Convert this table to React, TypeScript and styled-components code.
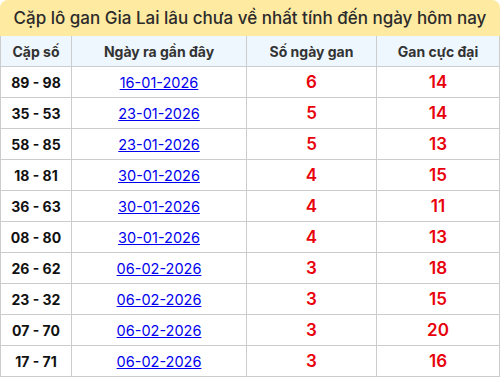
import React from "react";
import styled, { createGlobalStyle } from "styled-components";

const Global = createGlobalStyle`
  html, body { margin: 0; padding: 0; background: #fff; }
  body { font-family: "Inter", "Noto Sans", sans-serif; }
`;

const Wrap = styled.div`
  width: 500px;
`;

const Title = styled.div`
  height: 36px;
  background: #feeaa1;
  border-radius: 8px 8px 0 0;
  display: flex;
  align-items: center;
  justify-content: center;
  font-size: 17px;
  color: #2b2b2b;
  font-weight: 500;
  box-sizing: border-box;
`;

const Table = styled.table`
  width: 500px;
  border-collapse: collapse;
  table-layout: fixed;
`;

const Th = styled.th<{ $w?: number }>`
  width: ${(p) => (p.$w ? `${p.$w}px` : "auto")};
  height: 30px;
  padding: 0;
  background: #eef6fe;
  border: 1px solid #cccccc;
  border-top: none;
  font-size: 14px;
  font-weight: 700;
  color: #333;
  text-align: center;
`;

const Td = styled.td`
  height: 30px;
  padding: 0;
  border: 1px solid #cccccc;
  text-align: center;
`;

const Pair = styled.span`
  font-size: 14px;
  font-weight: 700;
  color: #111;
`;

const DateLink = styled.a`
  font-size: 14.5px;
  color: #0000ee;
  text-decoration: underline;
`;

const Num = styled.span`
  font-size: 17px;
  font-weight: 600;
  color: #e8000b;
`;

const rows = [
  ["89 - 98", "16-01-2026", "6", "14"],
  ["35 - 53", "23-01-2026", "5", "14"],
  ["58 - 85", "23-01-2026", "5", "13"],
  ["18 - 81", "30-01-2026", "4", "15"],
  ["36 - 63", "30-01-2026", "4", "11"],
  ["08 - 80", "30-01-2026", "4", "13"],
  ["26 - 62", "06-02-2026", "3", "18"],
  ["23 - 32", "06-02-2026", "3", "15"],
  ["07 - 70", "06-02-2026", "3", "20"],
  ["17 - 71", "06-02-2026", "3", "16"],
];

export default function App() {
  return (
    <Wrap>
      <Global />
      <Title>Cặp lô gan Gia Lai lâu chưa về nhất tính đến ngày hôm nay</Title>
      <Table>
        <thead>
          <tr>
            <Th $w={70}>Cặp số</Th>
            <Th $w={174}>Ngày ra gần đây</Th>
            <Th $w={129}>Số ngày gan</Th>
            <Th>Gan cực đại</Th>
          </tr>
        </thead>
        <tbody>
          {rows.map((r, i) => (
            <tr key={i}>
              <Td><Pair>{r[0]}</Pair></Td>
              <Td><DateLink href="#">{r[1]}</DateLink></Td>
              <Td><Num>{r[2]}</Num></Td>
              <Td><Num>{r[3]}</Num></Td>
            </tr>
          ))}
        </tbody>
      </Table>
    </Wrap>
  );
}
